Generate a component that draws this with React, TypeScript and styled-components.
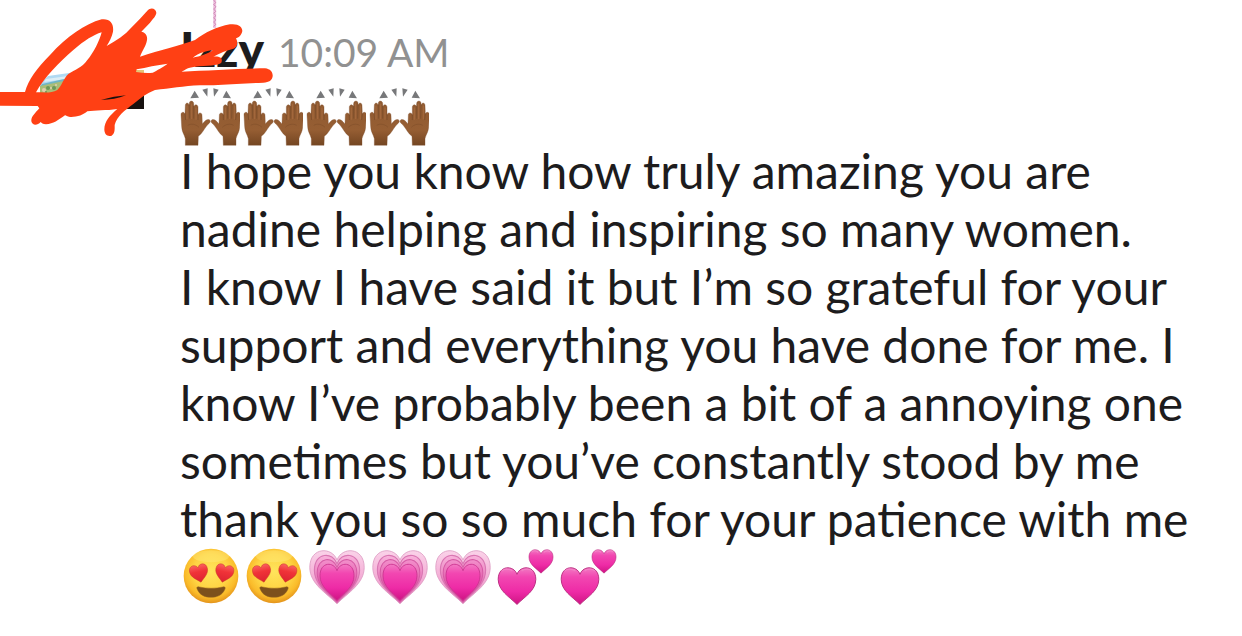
import React from "react";
import styled, { createGlobalStyle } from "styled-components";

const GlobalStyle = createGlobalStyle`
  * { box-sizing: border-box; }
  body {
    margin: 0;
    background: #fff;
    color: #1d1c1d;
    font-family: Lato, "Liberation Sans", sans-serif;
  }
`;

const Message = styled.article`
  position: relative;
  display: grid;
  grid-template-columns: 108px minmax(0, 1fr);
  column-gap: 36px;
  padding: 20px 36px;
`;

const Avatar = styled.svg`
  display: block;
  width: 108px;
  height: 90px;
`;

const Content = styled.div`
  min-width: 0;
`;

const Header = styled.header`
  display: flex;
  align-items: baseline;
  gap: 14px;
  height: 66px;
  line-height: 58px;
  white-space: nowrap;
`;

const Author = styled.h1`
  margin: 0;
  font-size: 48px;
  font-weight: 900;
`;

const Time = styled.time`
  color: #919191;
  font-size: 39px;
`;

const Paragraph = styled.p`
  margin: 0;
  font-size: 48px;
  line-height: 58px;
`;

const EmojiRow = styled.div`
  display: flex;
  align-items: flex-start;
  gap: 3px;
  height: 56px;
`;

const Emoji = styled.svg`
  display: block;
  flex: none;
  width: 60px;
  height: 60px;
`;

const Scribble = styled.svg`
  position: absolute;
  top: 0;
  left: 0;
  width: 280px;
  height: 150px;
  pointer-events: none;
`;

const HEART = "M0 -16 C-5 -31 -30 -31 -30 -8 C-30 10 -12 20 0 32 C12 20 30 10 30 -8 C30 -31 5 -31 0 -16Z";

const SharedPaint = () => (
  <Scribble aria-hidden="true">
    <defs>
      <linearGradient id="skin" x1="0" y1="0" x2="0" y2="1">
        <stop offset="0" stopColor="#8f5a31" />
        <stop offset=".65" stopColor="#965e33" />
        <stop offset="1" stopColor="#744622" />
      </linearGradient>
      <radialGradient id="face" cx=".5" cy=".42" r=".58">
        <stop offset="0" stopColor="#ffe45c" />
        <stop offset=".55" stopColor="#fed444" />
        <stop offset=".82" stopColor="#fabb2a" />
        <stop offset="1" stopColor="#e3931c" />
      </radialGradient>
      <linearGradient id="eye" x1="0" y1="0" x2="0" y2="1">
        <stop offset="0" stopColor="#fb6260" />
        <stop offset=".4" stopColor="#f03338" />
        <stop offset="1" stopColor="#dc2231" />
      </linearGradient>
      <linearGradient id="pink" x1="0" y1="0" x2="0" y2="1">
        <stop offset="0" stopColor="#f27ac3" />
        <stop offset=".25" stopColor="#f247b1" />
        <stop offset=".65" stopColor="#ee2ba6" />
        <stop offset="1" stopColor="#cf1384" />
      </linearGradient>
      <linearGradient id="ringOuter" x1="0" y1="0" x2="0" y2="1">
        <stop offset="0" stopColor="#fad3e9" />
        <stop offset=".6" stopColor="#f3a6d2" />
        <stop offset="1" stopColor="#e06fae" />
      </linearGradient>
      <linearGradient id="ringMiddle" x1="0" y1="0" x2="0" y2="1">
        <stop offset="0" stopColor="#f8b2db" />
        <stop offset="1" stopColor="#dc4b9f" />
      </linearGradient>
      <linearGradient id="ringInner" x1="0" y1="0" x2="0" y2="1">
        <stop offset="0" stopColor="#f390cc" />
        <stop offset="1" stopColor="#cf338d" />
      </linearGradient>
    </defs>
  </Scribble>
);

const Hand = () => (
  <>
    <path
      fill="url(#skin)"
      stroke="#7d4d2a"
      strokeWidth="1"
      d="M22 184 L22 164 C19 151 12 145 11 128 L9 92 C9 84 18 82 21 90 L22 64 C23 55 32 55 33 64 L34 58 C34 49 46 49 47 58 L48 68 C50 60 60 61 60 70 L60 94 C61 84 72 85 72 94 L73 120 C82 109 87 105 94 107 C101 112 94 118 88 123 C77 137 73 148 61 157 L60 184Z"
    />
    <path
      fill="none"
      stroke="#774a29"
      strokeWidth="2"
      d="M21 89 L23 108 M34 62 L35 104 M47 66 L47 104 M60 92 L60 108"
    />
    <path fill="none" stroke="#a56a3e" strokeWidth="3" strokeLinecap="round" d="M27 66V105 M41 60V104 M54 72V106" />
    <path fill="none" stroke="#82502b" strokeWidth="2" d="M29 124 C39 118 53 120 63 130" />
  </>
);

const RaisedHands = () => (
  <Emoji viewBox="6 6 180 180" role="img" aria-label="raised hands">
    <path fill="#77787a" d="M50 20 L37 43 L63 41Z M73 17 L89 13 L88 38Z M106 13 L122 17 L108 38Z M145 20 L134 41 L159 43Z" />
    <Hand />
    <g transform="translate(196 0) scale(-1 1)">
      <Hand />
    </g>
  </Emoji>
);

const HeartEyes = () => (
  <Emoji viewBox="0 9 180 180" role="img" aria-label="smiling face with heart eyes">
    <circle cx="93" cy="93" r="82" fill="url(#face)" />
    <ellipse cx="93" cy="34" rx="54" ry="18" fill="#fff08a" opacity=".35" />
    <g fill="url(#eye)" stroke="#c83b25" strokeWidth="1.5">
      <path transform="translate(57 83) rotate(-12) scale(.91)" d={HEART} />
      <path transform="translate(133 83) rotate(12) scale(.91)" d={HEART} />
    </g>
    <path
      fill="#7c501c"
      stroke="#99651c"
      strokeWidth="1.5"
      d="M51 131 C49 126 53 124 58 126 C80 131 108 131 128 126 C134 124 137 127 135 132 C127 151 111 157 93 157 C75 157 59 151 51 131Z"
    />
  </Emoji>
);

const GrowingHeart = () => (
  <Emoji viewBox="0 9 180 180" role="img" aria-label="growing heart">
    <path transform="translate(93 89) scale(2.72)" d={HEART} fill="url(#ringOuter)" stroke="#dfa0c6" strokeWidth="1" />
    <path transform="translate(93 95) scale(2.26 2.42)" d={HEART} fill="url(#ringMiddle)" stroke="#d977b3" strokeWidth="1.5" />
    <path transform="translate(93 101) scale(1.98 2.16)" d={HEART} fill="url(#ringInner)" stroke="#d65ba5" strokeWidth="1.5" />
    <path transform="translate(93 107) scale(1.7 1.86)" d={HEART} fill="url(#pink)" stroke="#cc3390" strokeWidth="1.5" />
  </Emoji>
);

const TwoHearts = () => (
  <Emoji viewBox="3 9 180 180" role="img" aria-label="two hearts">
    <g fill="url(#pink)" stroke="#b82a7d" strokeWidth="1.5">
      <path transform="translate(69 118) scale(1.88)" d={HEART} />
      <path transform="translate(141 46) scale(1.2)" d={HEART} />
    </g>
    <g fill="none" stroke="#f58cca" strokeWidth="4" strokeLinecap="round" opacity=".6">
      <path d="M24 77 C32 70 46 71 54 77 M84 77 C92 71 106 71 113 77" />
      <path d="M114 20 C120 16 127 17 131 21 M151 21 C156 17 163 16 168 20" />
    </g>
  </Emoji>
);

export default function App() {
  return (
    <>
      <GlobalStyle />
      <SharedPaint />
      <Message>
        <Avatar viewBox="0 -4 108 90" role="img" aria-label="Profile picture">
          <path fill="#b1daf3" d="M4 60 L12 52 L40 48 L36 70 H4Z" />
          <path fill="#dceef6" d="M10 55 L32 52 L30 55 L8 58Z" />
          <path fill="#6fb5c6" d="M6 60 L28 55 V59 L4 63Z" />
          <path fill="#a9bd77" d="M4 62 L28 57 V70 H4Z" />
          <g fill="#e0cfae">
            <circle cx="8" cy="66" r="2" />
            <circle cx="15" cy="64" r="1" />
            <circle cx="20" cy="61" r="1" />
          </g>
          <g fill="#6c9858">
            <circle cx="12" cy="64" r="2" />
            <circle cx="18" cy="64" r="2" />
            <circle cx="10" cy="68" r="1" />
          </g>
          <path fill="#e5c477" d="M98 46 H108 V49 H98Z" />
          <path fill="#17110f" d="M62 70 H108 V85 H62Z" />
        </Avatar>
        <Content>
          <Header>
            <Author>Izzy</Author>
            <Time dateTime="10:09">10:09 AM</Time>
          </Header>
          <EmojiRow>
            <RaisedHands />
            <RaisedHands />
            <RaisedHands />
            <RaisedHands />
          </EmojiRow>
          <Paragraph>I hope you know how truly amazing you are nadine helping and inspiring so many women.</Paragraph>
          <Paragraph>
            I know I have said it but I’m so grateful for your support and everything you have done for me. I know
            I’ve probably been a bit of a annoying one sometimes but you’ve constantly stood by me thank you so so
            much for your patience with me
          </Paragraph>
          <EmojiRow>
            <HeartEyes />
            <HeartEyes />
            <GrowingHeart />
            <GrowingHeart />
            <GrowingHeart />
            <TwoHearts />
            <TwoHearts />
          </EmojiRow>
        </Content>
        <Scribble viewBox="0 0 840 450" aria-hidden="true">
          <path fill="none" stroke="#ecc5df" strokeWidth="9" d="M644 0 V84" />
          <path
            fill="none"
            stroke="#c468a4"
            strokeWidth="2"
            d="M641 0 L647 8 L641 14 L648 20 L641 27 L647 34 L641 40 L648 47 L641 53 L647 60 L641 66 L647 73 L641 80"
          />
          <path
            fill="#ff4014"
            fillRule="evenodd"
            d="M0 276 L75 276 C85 240 110 205 150 165 C200 110 255 72 305 58 C330 55 342 70 339 95 C336 110 328 125 320 138 C350 122 375 105 395 82 C415 62 430 45 442 32 C452 20 468 25 469 38 C468 48 460 55 450 68 L424 95 C436 97 443 106 441 120 C438 138 428 150 420 170 C480 150 540 137 585 120 C615 98 650 80 690 73 C715 70 727 80 727 93 C724 108 715 112 708 115 C716 130 712 145 695 148 C675 153 665 158 640 170 C665 168 668 178 664 188 C655 197 620 196 585 200 C560 203 555 210 545 215 C620 212 720 206 795 205 C812 207 819 217 818 229 C816 242 808 247 790 248 C720 250 660 256 600 256 C550 258 510 266 465 270 C440 280 420 295 400 312 C375 330 350 350 344 375 C344 390 345 400 335 407 C322 411 313 403 313 388 C313 365 330 345 352 327 C320 332 285 330 262 334 C250 345 230 352 210 351 C200 350 198 345 195 346 C175 360 160 372 138 373 C128 373 125 368 122 366 C112 377 97 377 94 364 C93 350 105 340 118 325 L113 318 L0 317Z M108 277 C130 235 180 185 220 150 C255 120 280 105 305 97 C300 120 280 160 262 180 C245 205 225 208 205 222 C190 236 185 258 172 270 C155 280 135 277 108 277Z M410 208 C440 202 470 195 503 191 C490 200 470 212 458 218 C440 220 425 218 408 216Z M578 173 C594 161 618 152 638 151 C624 161 600 170 578 173Z M303 300 C330 292 355 288 378 286 C355 295 330 300 303 300Z"
          />
        </Scribble>
      </Message>
    </>
  );
}
